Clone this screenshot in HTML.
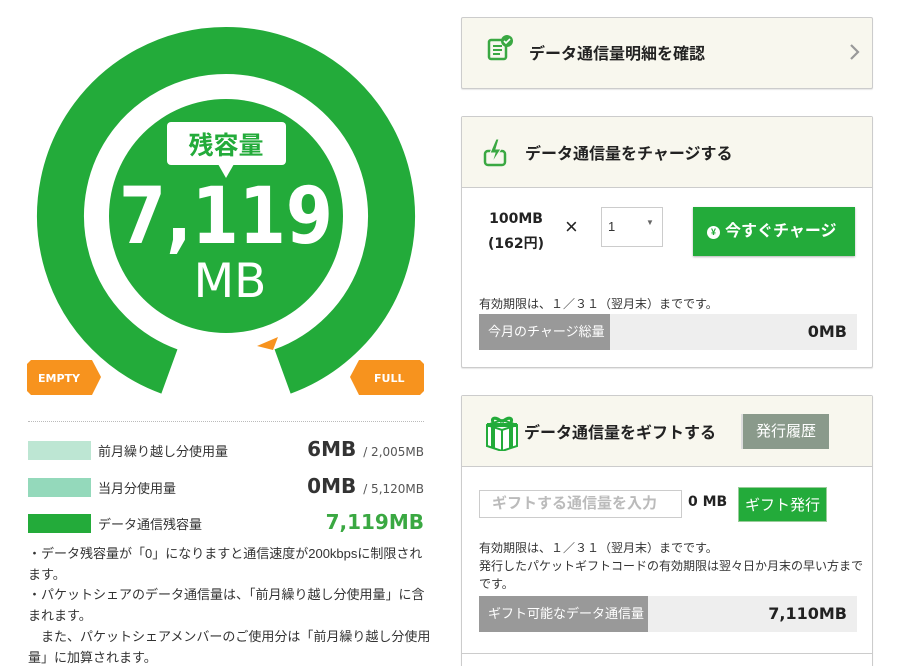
<!DOCTYPE html>
<html><head><meta charset="utf-8"><style>
*{margin:0;padding:0;box-sizing:border-box}
html,body{width:907px;height:666px;overflow:hidden}
body{background:#fff;font-family:"Liberation Sans","Noto Sans CJK JP",sans-serif;color:#333;position:relative}
.a{position:absolute}
.panel{position:absolute;left:461px;width:412px;border:1px solid #ccc;border-radius:2px;background:#fff;box-shadow:0 1px 1px rgba(0,0,0,.1)}
.hd{background:#f8f7ee;border-bottom:1px solid #ccc;position:relative}
.ttl{position:absolute;font-size:16px;font-weight:bold;color:#222}
.bar{position:absolute;left:17px;width:378px;height:36px;background:#eee}
.bar .l{position:absolute;left:0;top:0;height:36px;background:#999;color:#fff;font-size:13px;line-height:36px;padding-left:9px}
.bar .r{position:absolute;right:10px;top:0;line-height:36px;font-size:16px;font-weight:bold;font-family:"DejaVu Sans",sans-serif;color:#222}
.sw{position:absolute;left:28px;width:63px;height:19px}
.lb{position:absolute;left:98px;font-size:13px;color:#333}
.val{position:absolute;right:483px;font-family:"DejaVu Sans",sans-serif;font-weight:bold;font-size:20px;color:#333;white-space:nowrap}
.val small{font-weight:normal;font-size:12px;color:#555}
.note{position:absolute;left:28px;top:544px;width:420px;white-space:nowrap;font-size:13px;line-height:20.7px;color:#333}
</style></head><body>
<svg class="a" style="left:0;top:0" width="450" height="410">
<path d="M169.4 371.5 A165.5 165.5 0 1 1 282.6 371.5" fill="none" stroke="#23ab3a" stroke-width="47"/>
<circle cx="226" cy="216" r="117" fill="#23ab3a"/>
<polygon points="257,346 278,337 273,350" fill="#f7931e"/>
<polygon points="31,360 92,360 101,377 92,395 31,395 27,391 27,364" fill="#f7931e"/>
<polygon points="359,360 420,360 424,364 424,391 420,395 359,395 350,377" fill="#f7931e"/>
<text x="38" y="382" font-family="DejaVu Sans" font-weight="bold" font-size="11" fill="#fff">EMPTY</text>
<text x="374" y="382" font-family="DejaVu Sans" font-weight="bold" font-size="11" fill="#fff">FULL</text>
<rect x="167" y="122" width="119" height="43" rx="4" fill="#fff"/>
<polygon points="218,164 234,164 226,178" fill="#fff"/>
<text x="226" y="154" text-anchor="middle" font-family="Noto Sans CJK JP" font-weight="bold" font-size="25" fill="#23ab3a">残容量</text>
<text x="226" y="243" text-anchor="middle" font-family="DejaVu Sans" font-weight="bold" font-size="78" fill="#fff" textLength="214" lengthAdjust="spacingAndGlyphs">7,119</text>
<text x="230" y="297" text-anchor="middle" font-family="DejaVu Sans" font-size="47" fill="#fff">MB</text>
</svg>
<div class="a" style="left:28px;top:421px;width:396px;border-top:1px dotted #bbb"></div>
<div class="sw" style="top:441px;background:#bde6d3"></div><div class="lb" style="top:441px">前月繰り越し分使用量</div>
<div class="val" style="top:437px">6MB <small>/ 2,005MB</small></div>
<div class="sw" style="top:478px;background:#94d9bb"></div><div class="lb" style="top:478px">当月分使用量</div>
<div class="val" style="top:474px">0MB <small>/ 5,120MB</small></div>
<div class="sw" style="top:514px;background:#23ab3a"></div><div class="lb" style="top:514px">データ通信残容量</div>
<div class="val" style="top:510px;color:#3aa842">7,119MB</div>
<div class="note">・データ残容量が「0」になりますと通信速度が200kbpsに制限され<br>ます。<br>・パケットシェアのデータ通信量は、「前月繰り越し分使用量」に含<br>まれます。<br>　また、パケットシェアメンバーのご使用分は「前月繰り越し分使用<br>量」に加算されます。</div>

<div class="panel" style="top:17px;height:72px;background:#f8f7ee">
<svg class="a" style="left:24px;top:16px" width="30" height="30"><rect x="3" y="6" width="17" height="19" rx="2" fill="none" stroke="#3aa842" stroke-width="2.5"/><path d="M7 12h9M7 16h9M7 20h7" stroke="#3aa842" stroke-width="2"/><circle cx="21" cy="7" r="6" fill="#3aa842"/><path d="M18 7l2 2 4-4" stroke="#fff" stroke-width="1.6" fill="none"/></svg>
<div class="ttl" style="left:67px;top:22px">データ通信量明細を確認</div>
<svg class="a" style="left:387px;top:25px" width="12" height="18"><path d="M2 2l7 7-7 7" stroke="#999" stroke-width="2.2" fill="none"/></svg>
</div>

<div class="panel" style="top:116px;height:252px">
<div class="hd" style="height:71px">
<svg class="a" style="left:21px;top:20px" width="28" height="32"><rect x="2" y="14" width="20" height="14" rx="3" fill="none" stroke="#3aa842" stroke-width="2.5"/><path d="M13 2 L7 16 L12 16 L9 26 L18 12 L13 12 L16 2Z" fill="#3aa842" stroke="#f8f7ee" stroke-width="1"/></svg>
<div class="ttl" style="left:63px;top:23px">データ通信量をチャージする</div>
</div>
<div class="a" style="left:26px;top:90px;font-family:'DejaVu Sans','Noto Sans CJK JP',sans-serif;font-weight:bold;font-size:14px;line-height:25px;text-align:center;color:#222">100MB<br>(162円)</div>
<div class="a" style="left:103px;top:97px;font-size:22px;color:#222">×</div>
<div class="a" style="left:139px;top:90px;width:62px;height:40px;border:1px solid #ccc;font-size:13px;padding:11px 0 0 6px">1<span style="position:absolute;left:44px;top:10px;font-size:8px;color:#666">▼</span></div>
<div class="a" style="left:231px;top:90px;width:162px;height:49px;background:#23ab3a;box-shadow:0 1px 2px rgba(0,0,0,.3);color:#fff;font-weight:bold;font-size:16px;line-height:49px;padding-left:14px"><span style="display:inline-block;width:13px;height:13px;border-radius:50%;background:#fff;color:#23ab3a;font-size:9px;line-height:13px;text-align:center;vertical-align:1px;margin-right:5px">¥</span>今すぐチャージ</div>
<div class="a" style="left:17px;top:178px;font-size:12px;color:#333">有効期限は、１／３１（翌月末）までです。</div>
<div class="bar" style="top:197px"><div class="l" style="width:131px">今月のチャージ総量</div><div class="r">0MB</div></div>
</div>

<div class="panel" style="top:395px;height:290px">
<div class="hd" style="height:71px">
<svg class="a" style="left:20px;top:17px" width="40" height="38"><path d="M5 12 L20 7 L35 12 L35 33 L20 38 L5 33Z" fill="#fff" stroke="#23ab3a" stroke-width="2"/><path d="M5 12 L20 17 L35 12 M20 17 L20 38" stroke="#23ab3a" stroke-width="2" fill="none"/><path d="M11 14 L11 35 M29 14 L29 35" stroke="#23ab3a" stroke-width="4"/><path d="M20 9 C12 2 8 6 12 11 M20 9 C28 2 32 6 28 11" stroke="#23ab3a" stroke-width="3" fill="none"/><rect x="5" y="10" width="30" height="4" fill="#23ab3a"/></svg>
<div class="ttl" style="left:62px;top:23px">データ通信量をギフトする</div>
<div class="a" style="left:279px;top:18px;width:88px;height:35px;background:#8a9a8b;color:#fff;font-size:15px;line-height:35px;text-align:center;border-left:2px solid #ddd">発行履歴</div>
</div>
<div class="a" style="left:17px;top:94px;width:203px;height:28px;border:1px solid #ccc;color:#bbb;font-weight:bold;font-size:15px;line-height:26px;padding-left:12px">ギフトする通信量を入力</div>
<div class="a" style="left:226px;top:98px;font-family:'DejaVu Sans',sans-serif;font-weight:bold;font-size:14px;color:#222">0 MB</div>
<div class="a" style="left:276px;top:91px;width:89px;height:35px;background:#23ab3a;color:#fff;font-size:15px;line-height:35px;text-align:center;border:1px solid #9c9">ギフト発行</div>
<div class="a" style="left:17px;top:143px;font-size:12px;line-height:18px;width:388px;color:#333">有効期限は、１／３１（翌月末）までです。<br>発行したパケットギフトコードの有効期限は翌々日か月末の早い方までです。</div>
<div class="bar" style="top:200px"><div class="l" style="width:169px">ギフト可能なデータ通信量</div><div class="r">7,110MB</div></div>
<div class="a" style="left:0;top:257px;width:410px;border-top:1px solid #ccc"></div>
</div>
</body></html>
